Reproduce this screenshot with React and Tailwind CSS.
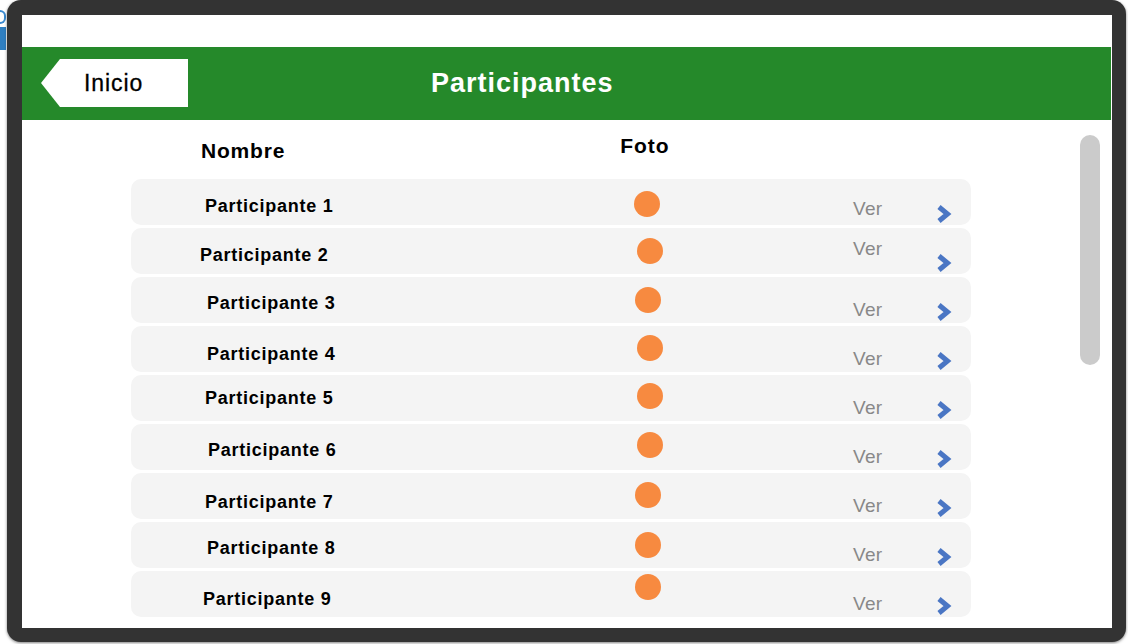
import React from 'react';

const participants = [
  { name: 'Participante 1', nx: 74, ny: 17, cx: 0, cy: 12, vy: 19 },
  { name: 'Participante 2', nx: 69, ny: 17, cx: 3, cy: 10, vy: 10 },
  { name: 'Participante 3', nx: 76, ny: 16, cx: 1, cy: 10, vy: 22 },
  { name: 'Participante 4', nx: 76, ny: 18, cx: 3, cy: 9, vy: 22 },
  { name: 'Participante 5', nx: 74, ny: 13, cx: 3, cy: 8, vy: 22 },
  { name: 'Participante 6', nx: 77, ny: 16, cx: 3, cy: 8, vy: 22 },
  { name: 'Participante 7', nx: 74, ny: 19, cx: 1, cy: 9, vy: 22 },
  { name: 'Participante 8', nx: 76, ny: 16, cx: 1, cy: 10, vy: 22 },
  { name: 'Participante 9', nx: 72, ny: 18, cx: 1, cy: 3, vy: 22 },
];

const Chevron = () => (
  <svg width="18" height="20" viewBox="0 0 18 20" className="block">
    <polyline
      points="4,3 12.5,10 4,17"
      fill="none"
      stroke="#4a76c4"
      strokeWidth="5"
      strokeLinejoin="miter"
    />
  </svg>
);

const Row = ({ p }) => (
  <div className="grid h-[46px] grid-cols-[503px_219px_82px_1fr] items-start rounded-[10px] bg-[#f4f4f4]">
    <div
      className="text-[18px] leading-[20px] font-bold tracking-[0.75px] text-black"
      style={{ marginTop: p.ny, paddingLeft: p.nx }}
    >
      {p.name}
    </div>
    <div
      className="h-[26px] w-[26px] rounded-full bg-[#f78a40]"
      style={{ marginTop: p.cy, marginLeft: p.cx }}
    />
    <div className="text-[19px] leading-[22px] tracking-[0.3px] text-[#888]" style={{ marginTop: p.vy }}>
      Ver
    </div>
    <div className="mt-[25px]">
      <Chevron />
    </div>
  </div>
);

const App = () => {
  return (
    <div className="relative h-[644px] w-[1128px] overflow-hidden bg-white font-['Liberation_Sans',Arial,sans-serif]">
      {/* bit of another window peeking out on the left */}
      <div className="absolute left-0 top-[10px] h-[14px] w-[6px] rounded-r-full border-2 border-l-0 border-[#3a8ad0]" />
      <div className="absolute left-0 top-[27px] h-[23px] w-[6px] bg-[#2f7fc1]" />

      <div className="relative ml-[7px] h-[642px] w-[1119px] rounded-[14px] bg-[#333] pl-[15px] pt-[15px] shadow-[0_1px_3px_rgba(0,0,0,0.5)]">
        <div className="relative h-[613px] w-[1090px] overflow-hidden bg-white">
          <div className="h-[32px]" />

          {/* header bar */}
          <div className="flex h-[73px] w-[1089px] items-start bg-[#25892a]">
            <div className="ml-[19px] mt-[12px] flex h-[48px] w-[147px] items-center bg-white pl-[43px] [clip-path:polygon(19px_0,100%_0,100%_100%,19px_100%,0_50%)]">
              <span className="text-[23px] leading-none tracking-[0.9px] text-black [-webkit-text-stroke:0.3px_black]">Inicio</span>
            </div>
            <div className="ml-[243px] mt-[21px] text-[27px] leading-[30px] font-bold tracking-[1px] text-white">
              Participantes
            </div>
          </div>

          {/* list */}
          <div className="relative h-[508px]">
            <div className="flex h-[59px] items-start">
              <div className="ml-[179px] mt-[19px] text-[21px] leading-[24px] font-bold tracking-[0.8px] text-black">
                Nombre
              </div>
              <div className="ml-[335px] mt-[14px] text-[21px] leading-[24px] font-bold tracking-[1px] text-black">
                Foto
              </div>
            </div>

            <div className="ml-[109px] flex w-[840px] flex-col gap-[3px]">
              {participants.map((p) => (
                <Row key={p.name} p={p} />
              ))}
            </div>

            {/* scrollbar thumb */}
            <div className="absolute left-[1058px] top-[15px] h-[230px] w-[20px] rounded-full bg-[#cbcbcb]" />
          </div>
        </div>
      </div>
    </div>
  );
};

export default App;
